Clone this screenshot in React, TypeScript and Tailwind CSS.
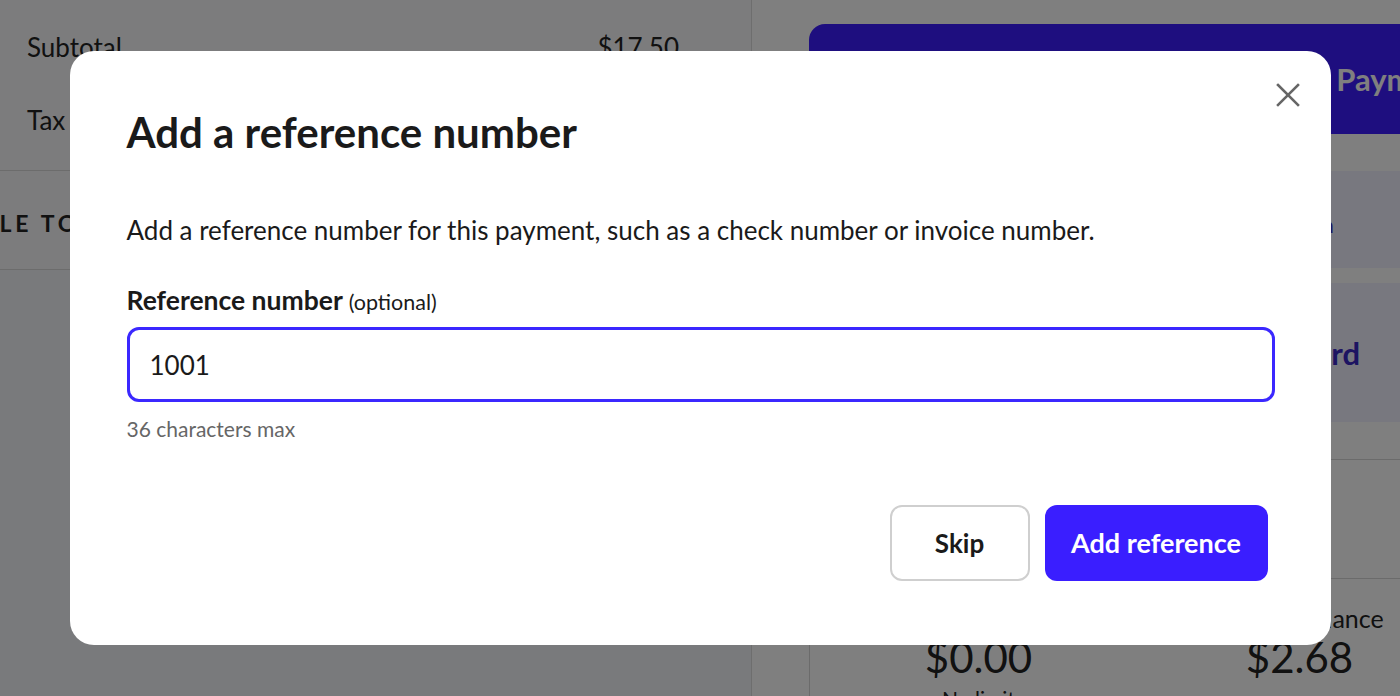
import { useState } from "react";

function CloseIcon() {
  return (
    <svg width="24" height="24" viewBox="0 0 24 24" fill="none" stroke="#666666" strokeWidth="2.6" strokeLinecap="square">
      <path d="M2 2L22 22" />
      <path d="M22 2L2 22" />
    </svg>
  );
}

/** Checkout screen behind the dialog */
function Checkout() {
  return (
    <div className="flex h-full w-full">
      {/* order summary */}
      <div className="w-[752px] shrink-0 flex flex-col border-r border-[#dcdcdc] bg-[#f3f4f8]">
        <div className="flex flex-col gap-[42px] pt-[32px] pb-[34px] pl-[27px] pr-[72px] bg-[#f8f8fa] border-b border-[#d8d8d8] text-[26px] leading-[31px] text-[#222]">
          <div className="flex justify-between">
            <span>Subtotal</span>
            <span>$17.50</span>
          </div>
          <div className="flex justify-between">
            <span>Tax</span>
            <span>$2.68</span>
          </div>
        </div>
        <div className="h-[99px] pt-[6px] flex items-center justify-between pr-[72px] bg-[#f8f8fa] border-b border-[#d8d8d8]">
          <span className="-ml-[36px] text-[23px] leading-[27px] font-bold tracking-[0.16em] text-[#222]">SALE TOTAL</span>
          <span className="text-[26px] font-bold text-[#222]">$20.18</span>
        </div>
      </div>

      {/* payment options */}
      <div className="flex-1 min-w-0 overflow-hidden bg-white pl-[57px] pt-[24px]">
        <div className="w-[1040px] flex flex-col">
          <button className="h-[110px] rounded-2xl bg-[#3c1cff] text-white text-[31px] font-bold text-left pl-[423px]">
            Record Payment
          </button>
          <div className="mt-[37px] h-[97px] rounded-xl bg-[#f0f0fe] flex items-center pt-[10px] pl-[481px] text-[20px] leading-[24px] font-bold text-[#3a28c4]">
            Cash
          </div>
          <div className="mt-[15px] h-[139px] rounded-xl bg-[#f0f0fe] flex items-center pl-[486px] text-[31px] leading-[36px] font-bold text-[#3a28c4]">
            Card
          </div>
          <div className="mt-[37px] h-[120px] border-y border-[#d6d6d6]" />
          <div className="h-[200px] border-l border-[#d6d6d6] grid grid-cols-[321px_321px] pl-[8px] pt-[25px] text-[#222]">
            <div className="flex flex-col items-center">
              <span className="text-[25px] leading-[29px]">Available credit</span>
              <span className="text-[42px] leading-[48px]">$0.00</span>
              <span className="mt-[5px] text-[21px] leading-[25px]">No limit</span>
            </div>
            <div className="flex flex-col items-center">
              <span className="text-[25px] leading-[29px]">Unpaid balance</span>
              <span className="text-[42px] leading-[48px]">$2.68</span>
            </div>
          </div>
        </div>
      </div>
    </div>
  );
}

export default function App() {
  const [reference, setReference] = useState("1001");

  return (
    <div className="relative h-[696px] w-full overflow-hidden font-['Lato','Noto_Sans',sans-serif]">
      <Checkout />

      <div className="absolute inset-0 bg-black/50 flex items-center justify-center">
        <div className="relative w-[1261px] rounded-[24px] bg-white pt-[56px] pb-[64px] pl-[57px] pr-[56px] flex flex-col text-[#1a1a1a]">
          <button className="absolute right-[31px] top-[32px]" aria-label="Close">
            <CloseIcon />
          </button>

          <h2 className="text-[42px] leading-[50px] font-bold">Add a reference number</h2>
          <p className="mt-[58px] text-[26px] leading-[31px]">
            Add a reference number for this payment, such as a check number or invoice number.
          </p>

          <label className="mt-[39px] text-[26.5px] leading-[31px] font-bold">
            Reference number <span className="text-[21.5px] font-normal">(optional)</span>
          </label>
          <input
            value={reference}
            onChange={(e) => setReference(e.target.value)}
            maxLength={36}
            className="mt-[9px] h-[75px] rounded-xl border-[3px] border-[#3b28ff] px-[20px] text-[26px] text-[#1a1a1a] outline-none"
          />
          <p className="mt-[14px] text-[21px] leading-[25px] text-[#666]">36 characters max</p>

          <div className="mt-[64px] flex justify-end gap-[15px] pr-[7px]">
            <button className="h-[76px] w-[140px] rounded-xl border-2 border-[#cfcfcf] bg-white text-[26px] font-bold text-[#1a1a1a]">
              Skip
            </button>
            <button className="h-[76px] w-[223px] rounded-xl bg-[#3a1eff] text-[27px] font-bold text-white">
              Add reference
            </button>
          </div>
        </div>
      </div>
    </div>
  );
}
